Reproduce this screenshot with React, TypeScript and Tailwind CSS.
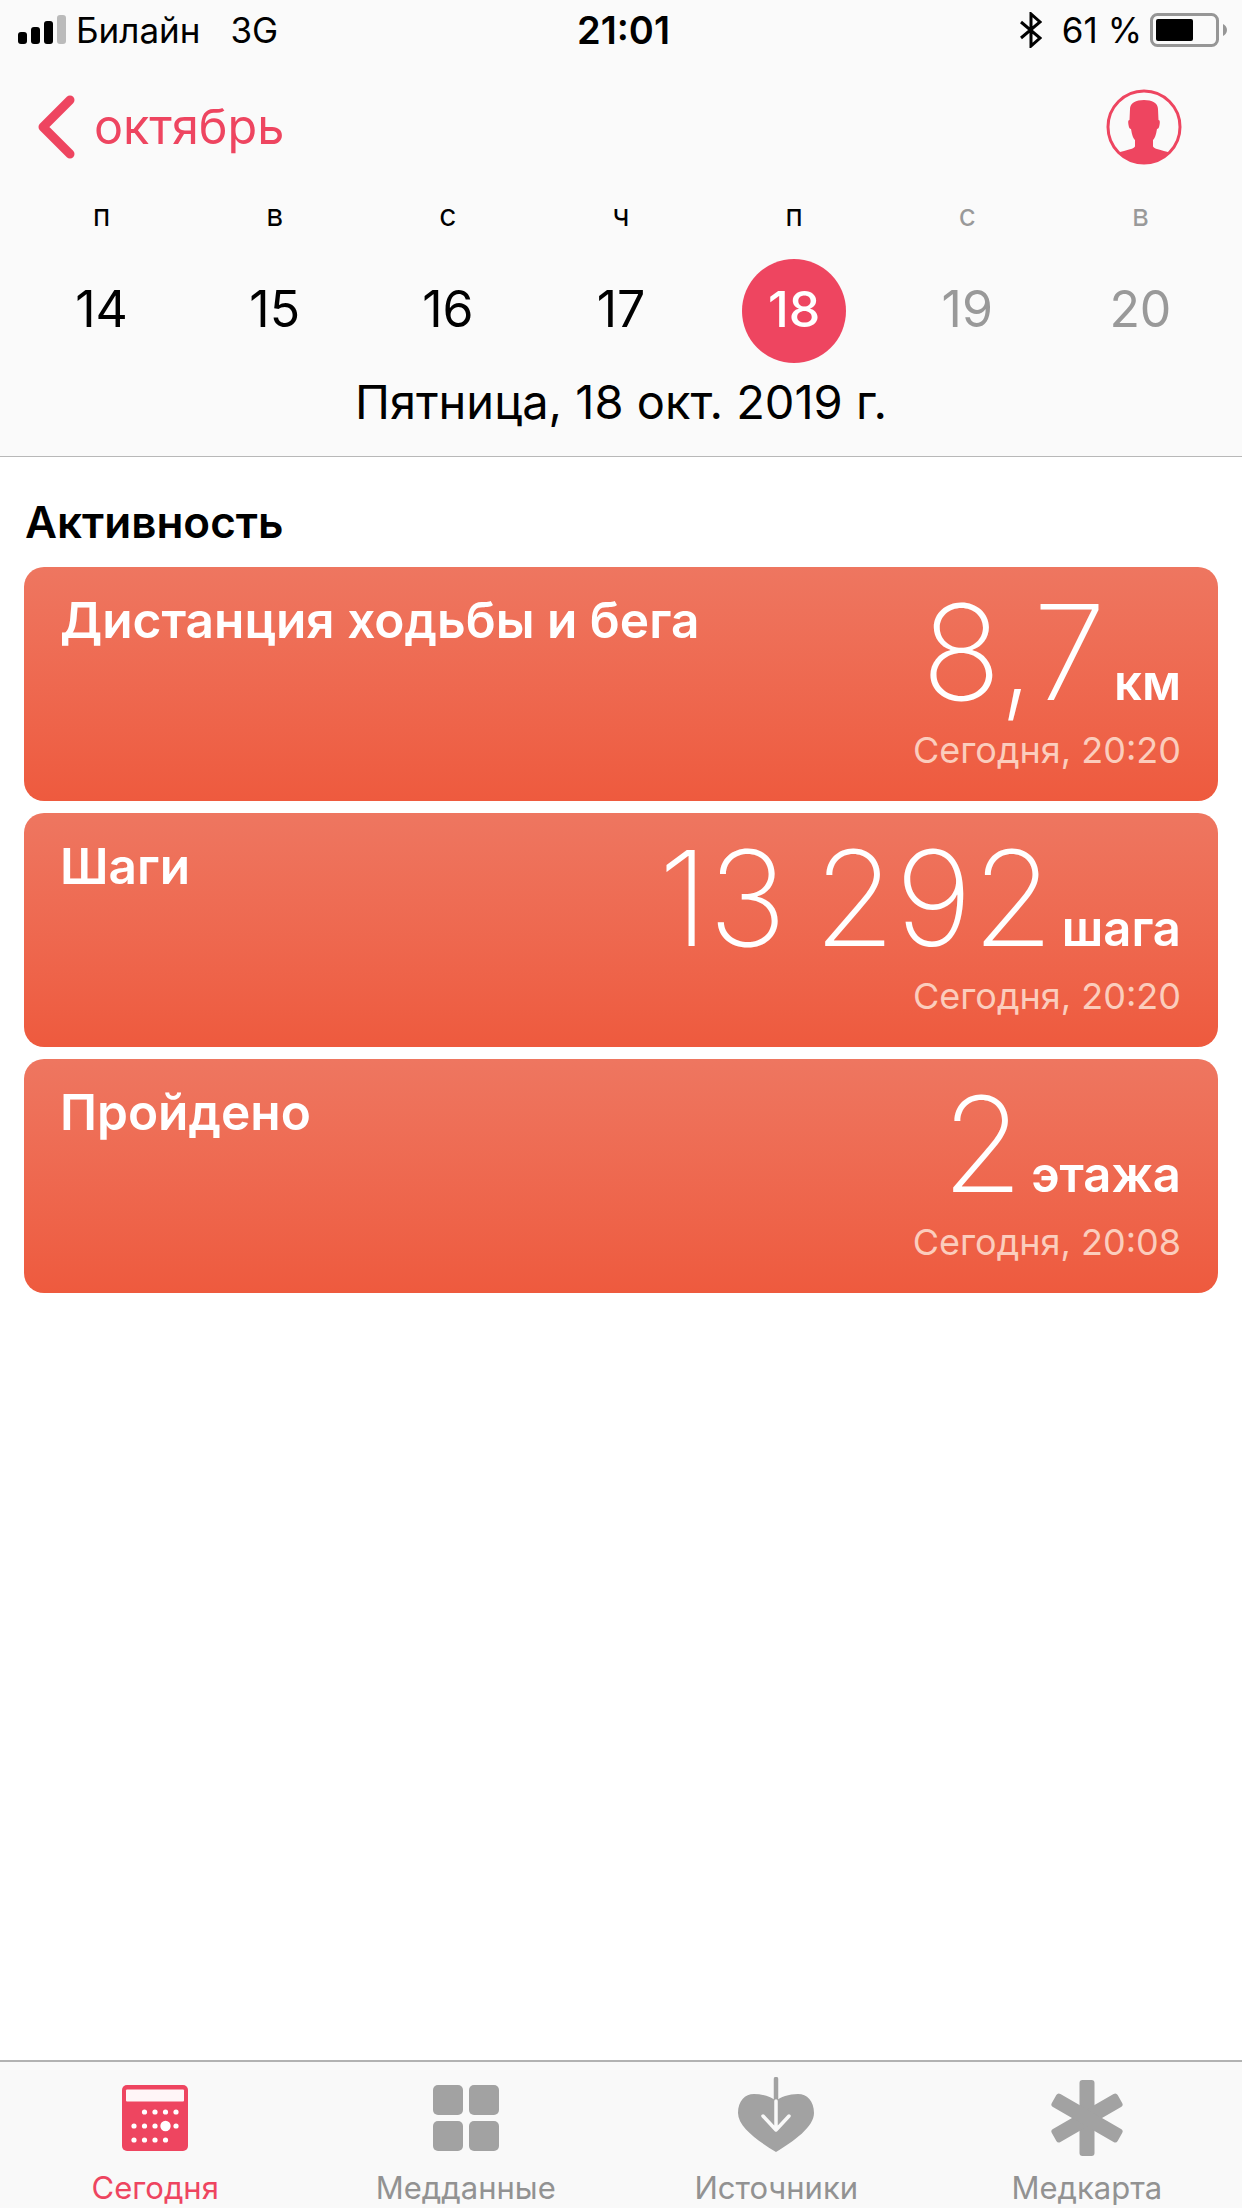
import type { ReactNode } from "react";

const FONT = "font-['Inter','Roboto',sans-serif]";

const WEEK = [
  { label: "п", day: "14" },
  { label: "в", day: "15" },
  { label: "с", day: "16" },
  { label: "ч", day: "17" },
  { label: "п", day: "18", today: true },
  { label: "с", day: "19", weekend: true },
  { label: "в", day: "20", weekend: true },
];

const CARDS = [
  { title: "Дистанция ходьбы и бега", value: "8,7", unit: "км", time: "Сегодня, 20:20" },
  { title: "Шаги", value: "13 292", unit: "шага", time: "Сегодня, 20:20" },
  { title: "Пройдено", value: "2", unit: "этажа", time: "Сегодня, 20:08" },
];

function StatusBar() {
  return (
    <div className="grid h-[60px] grid-cols-3 items-center pl-[18px] pr-[15px] text-[35px] leading-none text-black">
      <div className="flex items-center">
        <svg width="48" height="29" viewBox="0 0 48 29" className="mr-[10px] mt-[-1px]">
          <rect x="0" y="17" width="9" height="12" rx="3" fill="#000" />
          <rect x="13" y="12" width="9" height="17" rx="3" fill="#000" />
          <rect x="26" y="6" width="9" height="23" rx="3" fill="#000" />
          <rect x="39" y="0" width="9" height="29" rx="3" fill="#bbb" />
        </svg>
        <span>Билайн</span>
        <span className="ml-[30px]">3G</span>
      </div>
      <div className="pl-[2px] text-center text-[38px] font-semibold">21:01</div>
      <div className="flex items-center justify-end">
        <svg width="22" height="36" viewBox="0 0 22 36" className="mr-[20px]" fill="none" stroke="#000" strokeWidth="3">
          <path d="M1 10l19 16-9 8V2l9 8L1 26" />
        </svg>
        <span>61 %</span>
        <svg width="77" height="34" viewBox="0 0 77 34" className="ml-[8px]">
          <rect x="1.5" y="1.5" width="66" height="31" rx="6" fill="none" stroke="#969696" strokeWidth="3" />
          <rect x="6" y="6" width="37" height="22" rx="2" fill="#000" />
          <path d="M73 11c2 1 4 3 4 6s-2 5-4 6z" fill="#969696" />
        </svg>
      </div>
    </div>
  );
}

function NavRow() {
  return (
    <div className="flex h-[134px] items-center justify-between pl-[38px] pr-[60px]">
      <div className="flex items-center text-[#ee4560]">
        <svg width="38" height="64" viewBox="0 0 38 64" fill="none" stroke="currentColor" strokeWidth="9" strokeLinecap="round" strokeLinejoin="round">
          <path d="M32 5L5 32l27 27" />
        </svg>
        <span className="ml-[18px] text-[48.5px] leading-none">октябрь</span>
      </div>
      <svg width="76" height="76" viewBox="0 0 76 76">
        <defs>
          <clipPath id="avatar-clip">
            <circle cx="38" cy="38" r="36" />
          </clipPath>
        </defs>
        <circle cx="38" cy="38" r="36" fill="none" stroke="#ee4560" strokeWidth="3" />
        <path
          clipPath="url(#avatar-clip)"
          d="M38 11C46 11 52 14 52 20L52.5 31C54 31 54 33 53.5 36C53 39 52 40 51 40C50 46 49 49 47 51L47 57C47 59 50 60 62 63L62 76L14 76L14 63C26 60 29 59 29 57L29 51C27 49 26 46 25 40C24 40 23 39 22.5 36C22 33 22 31 23.5 31L24 20C24 14 30 11 38 11Z"
          fill="#ee4560"
        />
      </svg>
    </div>
  );
}

function WeekStrip() {
  return (
    <div className="grid grid-cols-7 px-[15px]">
      {WEEK.map((d, i) => (
        <div key={i} className="flex flex-col items-center">
          <div className={`flex h-[42px] items-center text-[30px] leading-none ${d.weekend ? "text-[#999]" : "text-black"}`}>
            {d.label}
          </div>
          <div
            className={`mt-[23px] flex h-[104px] w-[104px] items-center justify-center rounded-full pb-[4px] text-[50px] leading-none ${
              d.today ? "bg-[#ee4560] font-medium text-white" : d.weekend ? "text-[#999]" : "text-black"
            }`}
          >
            {d.day}
          </div>
        </div>
      ))}
    </div>
  );
}

function Card({ title, value, unit, time }: { title: string; value: string; unit: string; time: string }) {
  return (
    <div className="flex h-[234px] justify-between rounded-[20px] bg-gradient-to-b from-[#ee7660] to-[#ee5a3e] pl-[36px] pr-[37px] text-white">
      <div className="pt-[23px] text-[49.6px] font-semibold leading-[60px]">{title}</div>
      <div className="flex flex-col items-end">
        <div className="flex h-[156px] items-baseline pt-[15px]">
          <span className="text-[132px] font-extralight leading-[140px] [word-spacing:-10px]">{value}</span>
          <span className="ml-[8px] text-[49px] font-semibold leading-none">{unit}</span>
        </div>
        <div className="mt-[2px] text-[36px] leading-[50px] text-[#fbcdbd]">{time}</div>
      </div>
    </div>
  );
}

function TabItem({ icon, label, active }: { icon: ReactNode; label: string; active?: boolean }) {
  return (
    <div className={`flex flex-col items-center ${active ? "text-[#ee4560]" : "text-[#929292]"}`}>
      <div className="flex h-[112px] items-center justify-center">{icon}</div>
      <div className="text-[31px] leading-[28px]">{label}</div>
    </div>
  );
}

const DOTS = [
  [22.5, 27, 2.6], [33, 27, 2.6], [43.5, 27, 2.6], [54, 27, 2.6],
  [12, 41, 2.6], [22.5, 41, 2.6], [33, 41, 2.6], [43.5, 41, 5.2], [54, 41, 2.6],
  [12, 55, 2.6], [22.5, 55, 2.6], [33, 55, 2.6], [43.5, 55, 2.6],
];

function CalendarIcon() {
  return (
    <svg width="66" height="66" viewBox="0 0 66 66">
      <rect width="66" height="66" rx="5" fill="#ee4560" />
      <rect x="4" y="4.5" width="58" height="12" rx="1" fill="#fff" fillOpacity="0.95" />
      {DOTS.map(([x, y, r], i) => (
        <circle key={i} cx={x} cy={y} r={r} fill="#fff" />
      ))}
    </svg>
  );
}

function GridIcon() {
  return (
    <div className="grid grid-cols-[30px_30px] grid-rows-[30px_30px] gap-[6px]">
      <div className="rounded-[5px] bg-[#a2a2a2]" />
      <div className="rounded-[5px] bg-[#a2a2a2]" />
      <div className="rounded-[5px] bg-[#a2a2a2]" />
      <div className="rounded-[5px] bg-[#a2a2a2]" />
    </div>
  );
}

function HeartIcon() {
  return (
    <svg width="76" height="76" viewBox="0 0 76 76" className="mb-[7px]">
      <path
        d="M38 75C20 64 0 50 0 36 0 24 7 17 16 17c9 0 18 3 22 7 4-4 13-7 22-7 9 0 16 7 16 19 0 14-20 28-38 39z"
        fill="#a2a2a2"
      />
      <path d="M38 2v22" stroke="#a2a2a2" strokeWidth="4.5" strokeLinecap="round" />
      <path d="M38 24v28M25 39l13 14 13-14" stroke="#f9f9f9" strokeWidth="3.5" strokeLinecap="round" strokeLinejoin="round" fill="none" />
    </svg>
  );
}

function StarIcon() {
  return (
    <svg width="72" height="76" viewBox="0 0 72 76" fill="#a2a2a2">
      <rect x="28.5" y="0" width="15" height="76" rx="3" />
      <rect x="28.5" y="0" width="15" height="76" rx="3" transform="rotate(60 36 38)" />
      <rect x="28.5" y="0" width="15" height="76" rx="3" transform="rotate(-60 36 38)" />
    </svg>
  );
}

export default function App() {
  return (
    <div className={`flex h-[2208px] w-[1242px] flex-col overflow-hidden bg-white ${FONT}`}>
      {/* Header */}
      <div className="h-[457px] border-b border-[#b8b8b8] bg-[#fafafa]">
        <StatusBar />
        <NavRow />
        <WeekStrip />
        <div className="mt-[11px] text-center text-[47px] leading-[56px] text-black">Пятница, 18 окт. 2019 г.</div>
      </div>

      {/* Activity */}
      <div className="flex-1 px-[24px]">
        <div className="flex h-[110px] items-center pl-[1px] pt-[20px] text-[44px] font-semibold leading-none text-black">
          Активность
        </div>
        <div className="flex flex-col gap-[12px]">
          {CARDS.map((c) => (
            <Card key={c.title} {...c} />
          ))}
        </div>
      </div>

      {/* Tab bar */}
      <div className="grid h-[148px] grid-cols-4 border-t-2 border-[#b2b2b2] bg-[#f9f9f9]">
        <TabItem active icon={<CalendarIcon />} label="Сегодня" />
        <TabItem icon={<GridIcon />} label="Медданные" />
        <TabItem icon={<HeartIcon />} label="Источники" />
        <TabItem icon={<StarIcon />} label="Медкарта" />
      </div>
    </div>
  );
}
